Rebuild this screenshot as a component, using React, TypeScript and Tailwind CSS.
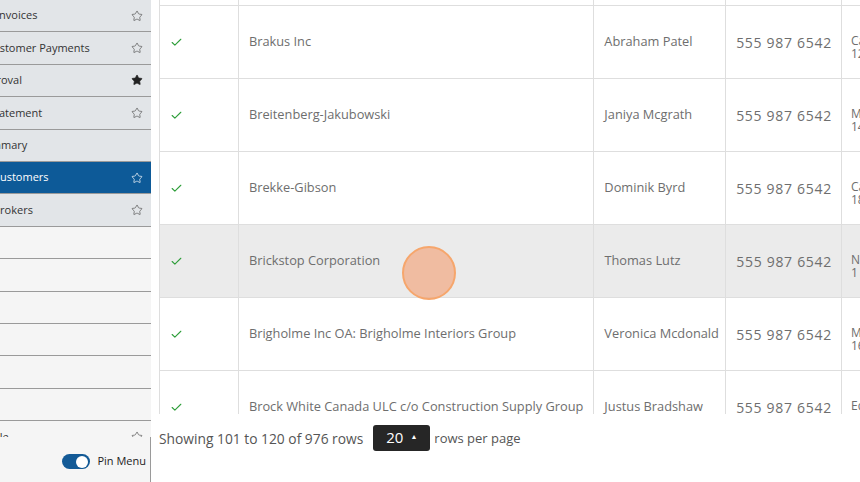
import React from 'react';
import { Star, Check } from 'lucide-react';

type NavItem = { label: string; shift: string; star: 'none' | 'outline' | 'filled'; active?: boolean };

const navItems: NavItem[] = [
  { label: 'Invoices', shift: '-ml-[4px]', star: 'outline' },
  { label: 'Customer Payments', shift: '-ml-[14px]', star: 'outline' },
  { label: 'Approval', shift: '-ml-[24px]', star: 'filled' },
  { label: 'Statement', shift: '-ml-[11px]', star: 'outline' },
  { label: 'Summary', shift: '-ml-[22px]', star: 'none' },
  { label: 'Customers', shift: '-ml-[7px]', star: 'outline', active: true },
  { label: 'Brokers', shift: '-ml-[7px]', star: 'outline' },
];

type Row = { name: string; contact: string; phone: string; addr1: string; addr2: string; hover?: boolean };

const rows: Row[] = [
  { name: 'Brady Industries', contact: 'Owen Fischer', phone: '555 987 6542', addr1: 'Calgary', addr2: '123 Main St' },
  { name: 'Brakus Inc', contact: 'Abraham Patel', phone: '555 987 6542', addr1: 'Calgary', addr2: '1200 Main St' },
  { name: 'Breitenberg-Jakubowski', contact: 'Janiya Mcgrath', phone: '555 987 6542', addr1: 'Montreal', addr2: '1450 Rue Peel' },
  { name: 'Brekke-Gibson', contact: 'Dominik Byrd', phone: '555 987 6542', addr1: 'Calgary', addr2: '1800 Centre St' },
  { name: 'Brickstop Corporation', contact: 'Thomas Lutz', phone: '555 987 6542', addr1: 'North York', addr2: '1 Yonge St', hover: true },
  { name: 'Brigholme Inc OA: Brigholme Interiors Group', contact: 'Veronica Mcdonald', phone: '555 987 6542', addr1: 'Mississauga', addr2: '1600 Dundas St' },
  { name: 'Brock White Canada ULC c/o Construction Supply Group', contact: 'Justus Bradshaw', phone: '555 987 6542', addr1: 'Edmonton', addr2: '1750 Gateway Blvd' },
];

const Sidebar: React.FC = () => (
  <aside className="w-[151px] h-full flex flex-col bg-[#f5f5f5] shrink-0">
    <div className="flex-1 overflow-hidden">
      {navItems.map((item) => (
        <div
          key={item.label}
          className={`h-[32.4px] flex items-center pr-[8px] border-b border-[#9a9a9a] overflow-hidden ${
            item.active ? 'bg-[#0d5a98] text-white' : 'bg-[#e2e5e8] text-[#333]'
          }`}
        >
          <span className={`flex-1 whitespace-nowrap text-[11px] ${item.shift}`}>{item.label}</span>
          {item.star === 'outline' && (
            <Star className={`w-[12px] h-[12px] ${item.active ? 'text-white' : 'text-[#555]'}`} strokeWidth={1.4} />
          )}
          {item.star === 'filled' && <Star className="w-[12px] h-[12px] text-[#222] fill-[#222]" strokeWidth={1.4} />}
        </div>
      ))}
      {[0, 1, 2, 3, 4, 5].map((i) => (
        <div key={i} className="h-[32.4px] border-b border-[#9a9a9a]" />
      ))}
      <div className="h-[32.4px] flex items-center pr-[8px] overflow-hidden">
        <span className="flex-1 whitespace-nowrap text-[11px] text-[#333] -ml-[38px]">Schedule</span>
        <Star className="w-[12px] h-[12px] text-[#555]" strokeWidth={1.4} />
      </div>
    </div>
    <div className="h-[45px] shrink-0 flex items-center justify-end gap-[7px] pr-[4px] pt-[4px] border-r border-[#9a9a9a] bg-[#f5f5f5]">
      <div className="w-[28px] h-[15px] rounded-full bg-[#135a96] flex items-center justify-end pr-[2px]">
        <div className="w-[12px] h-[12px] rounded-full bg-white" />
      </div>
      <span className="text-[11px] text-[#222]">Pin Menu</span>
    </div>
  </aside>
);

const App: React.FC = () => {
  return (
    <div
      className="w-[860px] h-[482px] flex bg-white overflow-hidden"
      style={{ fontFamily: '"Open Sans", "Liberation Sans", sans-serif' }}
    >
      <Sidebar />

      <main className="flex-1 flex flex-col pl-[8px] min-w-0 relative">
        {/* scrolled table body */}
        <div className="h-[414px] overflow-hidden border-l border-[#dedede]">
          <div className="-mt-[67px] w-[760px]">
            {rows.map((r) => (
              <div
                key={r.name}
                className={`h-[73px] flex border-b border-[#dedede] text-[12.8px] text-[#6e6e6e] ${
                  r.hover ? 'bg-[#ebebeb]' : 'bg-white'
                }`}
              >
                <div className="w-[79px] flex items-center pl-[10px] border-r border-[#dedede]">
                  <Check className="w-[13px] h-[13px] text-[#2e9e3a]" strokeWidth={2} />
                </div>
                <div className="w-[356px] flex items-center pl-[10px] border-r border-[#dedede] whitespace-nowrap">
                  {r.name}
                </div>
                <div className="w-[132px] flex items-center pl-[10px] border-r border-[#dedede] whitespace-nowrap">
                  {r.contact}
                </div>
                <div className="w-[116px] flex items-center pl-[10px] border-r border-[#dedede] whitespace-nowrap tracking-[0.7px] text-[14px]">
                  {r.phone}
                </div>
                <div className="w-[78px] flex flex-col justify-start pt-[28px] pl-[9px] text-[12px] leading-[13px] whitespace-nowrap">
                  <span>{r.addr1}</span>
                  <span>{r.addr2}</span>
                </div>
              </div>
            ))}
          </div>
        </div>

        {/* pagination */}
        <div className="flex items-center h-[52px] -mt-[1px] text-[13.8px] text-[#555]">
          <span>Showing 101 to 120 of 976 rows</span>
          <button className="ml-[10px] w-[57px] h-[26px] rounded-[3px] bg-[#262626] text-white text-[15px] flex items-center justify-center gap-[7px] mb-[3px]">
            20
            <span className="text-[7px]">▲</span>
          </button>
          <span className="ml-[4px] text-[13px]">rows per page</span>
        </div>

        {/* touch cursor indicator */}
        <div className="absolute left-[251px] top-[246px] w-[54px] h-[54px] rounded-full border-2 border-[#f6a66c] bg-[rgba(244,150,100,0.55)]" />
      </main>
    </div>
  );
};

export default App;
